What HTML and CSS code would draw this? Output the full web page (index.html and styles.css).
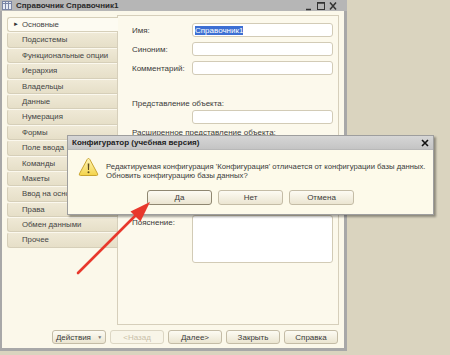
FILE: index.html
```html
<!DOCTYPE html>
<html lang="ru">
<head>
  <meta charset="UTF-8">
  <title>Справочник Справочник1</title>
  <link rel="stylesheet" href="styles.css">
</head>
<body>

<div class="window">
  <div class="titlebar">
    <svg class="title-icon" width="10" height="9" viewBox="0 0 10 9">
      <rect x="0.5" y="0.5" width="9" height="8" fill="#e8ecf4" stroke="#7b86a6"/>
      <line x1="0.5" y1="2.5" x2="9.5" y2="2.5" stroke="#7b86a6"/>
      <line x1="3.5" y1="0.5" x2="3.5" y2="8.5" stroke="#7b86a6"/>
      <line x1="6.5" y1="0.5" x2="6.5" y2="8.5" stroke="#7b86a6"/>
    </svg>
    <span class="title-text">Справочник Справочник1</span>
    <div class="win-controls">
      <svg width="40" height="10" viewBox="0 0 40 10">
        <line x1="2" y1="8.5" x2="7" y2="8.5" stroke="#333" stroke-width="1.5"/>
        <rect x="13.5" y="1.5" width="7" height="7" fill="none" stroke="#333"/>
        <line x1="13.5" y1="2" x2="20.5" y2="2" stroke="#333" stroke-width="1.5"/>
        <path d="M26 1.5 L32 8.5 M32 1.5 L26 8.5" stroke="#333" stroke-width="1.5"/>
      </svg>
    </div>
  </div>

  <div class="frame">
    <div class="content">
      <ul class="tabs">
        <li class="tab active"><span class="marker">&#9658;</span>Основные</li>
        <li class="tab">Подсистемы</li>
        <li class="tab">Функциональные опции</li>
        <li class="tab">Иерархия</li>
        <li class="tab">Владельцы</li>
        <li class="tab">Данные</li>
        <li class="tab">Нумерация</li>
        <li class="tab">Формы</li>
        <li class="tab">Поле ввода</li>
        <li class="tab">Команды</li>
        <li class="tab">Макеты</li>
        <li class="tab">Ввод на основании</li>
        <li class="tab">Права</li>
        <li class="tab">Обмен данными</li>
        <li class="tab">Прочее</li>
      </ul>

      <div class="panel">
        <div class="field">
          <label>Имя:</label>
          <div class="input"><span class="selected">Справочник1</span></div>
        </div>
        <div class="field">
          <label>Синоним:</label>
          <div class="input"></div>
        </div>
        <div class="field">
          <label>Комментарий:</label>
          <div class="input"></div>
        </div>

        <div class="block-label">Представление объекта:</div>
        <div class="input indent"></div>
        <div class="block-label second">Расширенное представление объекта:</div>
        <div class="input indent"></div>

        <div class="field note">
          <label>Пояснение:</label>
          <div class="input textarea"></div>
        </div>
      </div>
    </div>

    <div class="footer">
      <button class="btn actions">Действия <span class="caret">&#9660;</span></button>
      <button class="btn disabled">&lt;Назад</button>
      <button class="btn">Далее&gt;</button>
      <button class="btn">Закрыть</button>
      <button class="btn">Справка</button>
    </div>
  </div>
</div>

<div class="dialog">
  <div class="dialog-title">
    <span>Конфигуратор (учебная версия)</span>
    <svg class="dialog-close" width="8" height="8" viewBox="0 0 8 8">
      <path d="M1 1 L7 7 M7 1 L1 7" stroke="#111" stroke-width="1.6"/>
    </svg>
  </div>
  <div class="dialog-body">
    <div class="message">
      <svg class="warn-icon" width="21" height="20" viewBox="0 0 21 20">
        <defs>
          <linearGradient id="warnFill" x1="0" y1="0" x2="0" y2="1">
            <stop offset="0" stop-color="#fff6b8"/>
            <stop offset="1" stop-color="#f3d34a"/>
          </linearGradient>
        </defs>
        <path d="M10.5 1.5 Q11.3 1.5 11.8 2.4 L19.6 16.8 Q20.2 18.5 18.6 18.5 L2.4 18.5 Q0.8 18.5 1.4 16.8 L9.2 2.4 Q9.7 1.5 10.5 1.5 Z" fill="url(#warnFill)" stroke="#c9a430"/>
        <path d="M9.7 6.5 L11.3 6.5 L11 13 L10 13 Z" fill="#5a4a20"/>
        <circle cx="10.5" cy="15.3" r="1" fill="#5a4a20"/>
      </svg>
      <p class="message-text">Редактируемая конфигурация 'Конфигурация' отличается от конфигурации базы данных.<br>Обновить конфигурацию базы данных?</p>
    </div>
    <div class="dialog-buttons">
      <button class="btn wide default">Да</button>
      <button class="btn wide">Нет</button>
      <button class="btn wide">Отмена</button>
    </div>
  </div>
</div>

<svg class="arrow" width="450" height="355" viewBox="0 0 450 355">
  <line x1="78" y1="273" x2="140" y2="211" stroke="#e8382c" stroke-width="2.6" stroke-linecap="round"/>
  <polygon points="150,202 130.5,211.5 140.5,221.5" fill="#e8382c"/>
</svg>

</body>
</html>
```

FILE: styles.css
```css
body {
  margin: 0;
  width: 450px;
  height: 355px;
  overflow: hidden;
  position: relative;
  background-color: #dad4bf;
  font-family: "Liberation Sans", Arial, sans-serif;
  font-size: 8px;
  color: #3a3a3a;
}
.window {
  width: 347px;
  height: 351px;
  box-sizing: border-box;
  background-color: #a8a8a8;
  padding: 0 3px 3px 2px;
  display: flex;
  flex-direction: column;
}
.titlebar {
  height: 11px;
  display: flex;
  align-items: center;
  background-color: #b6b6b6;
  margin: 0 -3px 0 -2px;
  padding-left: 2px;
}
.title-icon {
  margin-right: 4px;
}
.title-text {
  font-weight: bold;
  color: #2a2a2a;
  font-size: 8px;
}
.win-controls {
  margin-left: auto;
  margin-right: 3px;
  display: flex;
}
.frame {
  flex: 1;
  display: flex;
  flex-direction: column;
  background-color: #fbf8ea;
  padding: 4px 5px 4px 5px;
  box-sizing: border-box;
}
.content {
  flex: 1;
  display: flex;
}
.tabs {
  list-style: none;
  margin: 2px 0 0 0;
  padding: 0;
  width: 110px;
  position: relative;
  z-index: 1;
}
.tab {
  height: 15.4px;
  box-sizing: border-box;
  background: linear-gradient(#efe9d6, #e6dfc8);
  border: 1px solid #d6cfb9;
  border-top-color: #fbf8ee;
  border-right: none;
  border-radius: 3px 0 0 3px;
  padding-left: 14px;
  line-height: 13px;
  font-size: 7.8px;
  white-space: nowrap;
  overflow: hidden;
  color: #444;
}
.tab.active {
  background: #fdfbf2;
  border-color: #d6cfb9;
  margin-right: -1px;
  position: relative;
  padding-left: 5px;
}
.marker {
  font-size: 6px;
  color: #333;
  margin-right: 3px;
  vertical-align: 1px;
}
.panel {
  flex: 1;
  background-color: #fcf9ec;
  border: 1px solid #d6cfbb;
  padding: 7px 5px 0 14px;
}
.field {
  display: flex;
  align-items: center;
  margin-bottom: 5px;
}
.field label {
  width: 60px;
  flex-shrink: 0;
}
.input {
  flex: 1;
  height: 14px;
  box-sizing: border-box;
  background-color: #ffffff;
  border: 1px solid #d2cbb6;
  border-radius: 3px;
  padding: 1px 2px;
  line-height: 11px;
}
.input.indent {
  margin-left: 60px;
}
.selected {
  background-color: #3d6fd3;
  color: #ffffff;
}
.block-label {
  margin-top: 24px;
  margin-bottom: 2px;
}
.block-label.second {
  margin-top: 4px;
}
.field.note {
  margin-top: 62px;
  align-items: flex-start;
}
.field.note label {
  margin-top: 3px;
}
.input.textarea {
  height: 48px;
}
.footer {
  display: flex;
  justify-content: flex-end;
  gap: 4px;
  margin-top: 5px;
  padding-right: 1px;
}
.btn {
  font-family: "Liberation Sans", Arial, sans-serif;
  font-size: 8px;
  color: #3a3a3a;
  width: 54px;
  height: 14px;
  padding: 0;
  background: linear-gradient(#fdfbf3, #ebe5d1);
  border: 1px solid #c4bca6;
  border-radius: 3px;
}
.btn.disabled {
  color: #c8c0a8;
  border-color: #dcd6c3;
  background: #f8f5e8;
}
.caret {
  font-size: 5px;
  color: #777;
  margin-left: 4px;
  vertical-align: 1px;
}
.dialog {
  position: absolute;
  z-index: 10;
  left: 67px;
  top: 135px;
  width: 367px;
  height: 80px;
  box-sizing: border-box;
  border: 1px solid #9e9e9e;
  background-color: #fdfaea;
  box-shadow: 2px 2px 2px rgba(0, 0, 0, 0.35);
  display: flex;
  flex-direction: column;
}
.dialog-title {
  height: 13px;
  display: flex;
  align-items: center;
  justify-content: space-between;
  background: linear-gradient(#d6d6d6, #c4c4c4);
  border-bottom: 1px solid #b8b8b8;
  padding: 0 4px 0 4px;
  font-weight: bold;
  color: #222;
}
.dialog-body {
  flex: 1;
  display: flex;
  flex-direction: column;
  padding: 7px 10px 0 10px;
}
.message {
  display: flex;
  align-items: flex-start;
}
.warn-icon {
  flex-shrink: 0;
  margin-right: 7px;
}
.message-text {
  margin: 5px 0 0 0;
  font-size: 7.7px;
  line-height: 9px;
  color: #3a3a3a;
  white-space: nowrap;
}
.dialog-buttons {
  display: flex;
  justify-content: center;
  gap: 6px;
  margin-top: 10px;
}
.btn.wide {
  width: 65px;
  height: 15px;
}
.btn.default {
  border-color: #8f8771;
}
.arrow {
  position: absolute;
  z-index: 20;
  left: 0;
  top: 0;
  pointer-events: none;
}
```
